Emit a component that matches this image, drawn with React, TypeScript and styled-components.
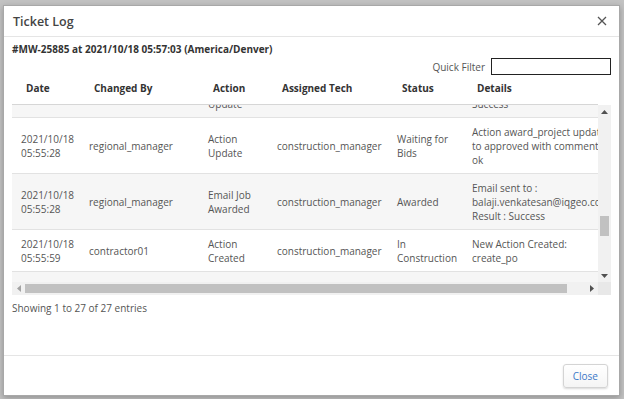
import React from "react";
import styled, { createGlobalStyle } from "styled-components";

const GlobalStyle = createGlobalStyle`
  html, body {
    margin: 0;
    padding: 0;
    background: #c2c2c2;
  }
  body {
    font-family: "Open Sans", "Noto Sans", Arial, sans-serif;
    color: #555;
  }
`;

const COLS = "68px 119px 69px 120px 75px 220px";

const Backdrop = styled.div`
  width: 624px;
  height: 399px;
  box-sizing: border-box;
  padding: 5px 4px 3px 3px;
  background: #c2c2c2;
  display: flex;
`;

const Modal = styled.div`
  flex: 1;
  display: flex;
  flex-direction: column;
  background: #fff;
  border: 1px solid #a8a8a8;
  box-shadow: 0 2px 6px rgba(0, 0, 0, 0.25);
  overflow: hidden;
`;

const ModalHeader = styled.div`
  height: 30px;
  display: flex;
  align-items: center;
  justify-content: space-between;
  padding: 0 11px 0 9px;
  border-bottom: 1px solid #e5e5e5;
`;

const Title = styled.div`
  font-size: 12.5px;
  font-weight: 600;
  color: #444;
`;

const CloseX = styled.button`
  border: 0;
  background: none;
  padding: 0;
  width: 12px;
  height: 12px;
  display: flex;
  align-items: center;
  justify-content: center;
  cursor: pointer;
`;

const ModalBody = styled.div`
  flex: 1;
  padding: 5px 8px 0 8px;
  display: flex;
  flex-direction: column;
`;

const Subtitle = styled.div`
  font-size: 10px;
  font-weight: 700;
  color: #333;
  line-height: 14px;
`;

const FilterRow = styled.div`
  display: flex;
  justify-content: flex-end;
  align-items: center;
  gap: 6px;
  margin-top: 2px;
  font-size: 10px;
  color: #555;
`;

const FilterInput = styled.input`
  width: 120px;
  height: 17px;
  box-sizing: border-box;
  border: 1px solid #222;
  padding: 0 3px;
  margin: 0;
  font-size: 10px;
  outline: none;
`;

const TableWrap = styled.div`
  margin-top: 1px;
  width: 599px;
`;

const HeadRow = styled.div`
  display: grid;
  grid-template-columns: ${COLS};
  height: 29px;
  padding-bottom: 4px;
  align-items: center;
  border-bottom: 1px solid #d6d6d6;
  overflow: hidden;
  width: 586px;
  box-sizing: border-box;
`;

const HeadCell = styled.div`
  padding-left: 14px;
  font-size: 10px;
  font-weight: 700;
  color: #333;
  white-space: nowrap;
`;

const ScrollArea = styled.div`
  display: grid;
  grid-template-columns: 586px 13px;
  grid-template-rows: 177px 13px;
`;

const Viewport = styled.div`
  overflow: hidden;
  display: flex;
  flex-direction: column;
`;

/* rows cut by the scroll viewport: "top" keeps only the bottom of its cells */
const Row = styled.div<{ $striped?: boolean; $clip?: "top" | "bottom" }>`
  display: grid;
  grid-template-columns: ${COLS};
  align-items: center;
  align-content: ${(p) => (p.$clip === "top" ? "end" : "normal")};
  background: ${(p) => (p.$striped ? "#f6f6f6" : "#fff")};
  border-bottom: ${(p) => (p.$clip === "bottom" ? "0" : "1px solid #e2e2e2")};
  height: ${(p) => (p.$clip === "top" ? "12px" : p.$clip === "bottom" ? "10px" : "auto")};
  overflow: hidden;
  flex-shrink: 0;
`;

const Cell = styled.div`
  padding: 6.5px 9px;
  font-size: 10px;
  line-height: 14px;
  color: #555;
  white-space: nowrap;
`;

const VTrack = styled.div`
  background: #f1f1f1;
  display: flex;
  flex-direction: column;
  align-items: center;
`;

const HTrack = styled.div`
  background: #f1f1f1;
  display: flex;
  align-items: center;
`;

const Corner = styled.div`
  background: #e8e8e8;
`;

const ArrowBtn = styled.div<{ $size: number }>`
  width: ${(p) => p.$size}px;
  height: ${(p) => p.$size}px;
  display: flex;
  align-items: center;
  justify-content: center;
  flex-shrink: 0;
`;

const VThumbSpace = styled.div`
  flex: 1;
  width: 100%;
  display: flex;
  flex-direction: column;
  align-items: center;
`;

const VThumb = styled.div`
  width: 9px;
  height: 20px;
  background: #c1c1c1;
  margin-top: 98px;
`;

const HThumb = styled.div`
  flex: 1;
  height: 9px;
  background: #c1c1c1;
  margin-right: 18px;
`;

const Info = styled.div`
  margin-top: 6px;
  font-size: 10px;
  color: #555;
  line-height: 14px;
`;

const ModalFooter = styled.div`
  height: 39px;
  border-top: 1px solid #e5e5e5;
  display: flex;
  align-items: center;
  justify-content: flex-end;
  padding-right: 11px;
`;

const Button = styled.button`
  height: 24px;
  padding: 0 9px;
  font-family: inherit;
  font-size: 10px;
  color: #3b78c8;
  background: linear-gradient(#ffffff, #f5f5f5);
  border: 1px solid #d4d4d4;
  border-radius: 3px;
  box-shadow: 0 1px 2px rgba(0, 0, 0, 0.15);
  cursor: pointer;
`;

type Arrow = "up" | "down" | "left" | "right";

const arrowPoints: Record<Arrow, string> = {
  up: "0,4 3.5,0 7,4",
  down: "0,0 3.5,4 7,0",
  left: "4,0 0,3.5 4,7",
  right: "0,0 4,3.5 0,7",
};

function Tri({ dir, fill }: { dir: Arrow; fill: string }) {
  const vertical = dir === "up" || dir === "down";
  return (
    <svg width={vertical ? 7 : 4} height={vertical ? 4 : 7} viewBox={vertical ? "0 0 7 4" : "0 0 4 7"}>
      <polygon points={arrowPoints[dir]} fill={fill} />
    </svg>
  );
}

const headers = ["Date", "Changed By", "Action", "Assigned Tech", "Status", "Details"];

const rows: string[][][] = [
  [
    ["2021/10/18", "05:55:28"],
    ["regional_manager"],
    ["Action", "Update"],
    ["construction_manager"],
    ["Waiting for", "Bids"],
    ["Action award_project updated", "to approved with comments:", "ok"],
  ],
  [
    ["2021/10/18", "05:55:28"],
    ["regional_manager"],
    ["Email Job", "Awarded"],
    ["construction_manager"],
    ["Awarded"],
    ["Email sent to :", "balaji.venkatesan@iqgeo.com", "Result : Success"],
  ],
  [
    ["2021/10/18", "05:55:59"],
    ["contractor01"],
    ["Action", "Created"],
    ["construction_manager"],
    ["In", "Construction"],
    ["New Action Created:", "create_po"],
  ],
];

const lines = (parts: string[]) =>
  parts.map((p, i) => (
    <React.Fragment key={i}>
      {i > 0 && <br />}
      {p}
    </React.Fragment>
  ));

export default function App() {
  return (
    <>
      <GlobalStyle />
      <Backdrop>
        <Modal>
          <ModalHeader>
            <Title>Ticket Log</Title>
            <CloseX aria-label="close">
              <svg width="10" height="10" viewBox="0 0 10 10">
                <path d="M1 1 L9 9 M9 1 L1 9" stroke="#555" strokeWidth="1.3" />
              </svg>
            </CloseX>
          </ModalHeader>
          <ModalBody>
            <Subtitle>#MW-25885 at 2021/10/18 05:57:03 (America/Denver)</Subtitle>
            <FilterRow>
              Quick Filter
              <FilterInput />
            </FilterRow>
            <TableWrap>
              <HeadRow>
                {headers.map((h) => (
                  <HeadCell key={h}>{h}</HeadCell>
                ))}
              </HeadRow>
              <ScrollArea>
                <Viewport>
                  <Row $striped $clip="top">
                    <Cell />
                    <Cell />
                    <Cell>Update</Cell>
                    <Cell />
                    <Cell />
                    <Cell>Success</Cell>
                  </Row>
                  {rows.map((r, i) => (
                    <Row key={i} $striped={i % 2 === 1}>
                      {r.map((c, j) => (
                        <Cell key={j}>{lines(c)}</Cell>
                      ))}
                    </Row>
                  ))}
                  <Row $striped $clip="bottom" />
                </Viewport>
                <VTrack>
                  <ArrowBtn $size={13}>
                    <Tri dir="up" fill="#505050" />
                  </ArrowBtn>
                  <VThumbSpace>
                    <VThumb />
                  </VThumbSpace>
                  <ArrowBtn $size={13}>
                    <Tri dir="down" fill="#505050" />
                  </ArrowBtn>
                </VTrack>
                <HTrack>
                  <ArrowBtn $size={13}>
                    <Tri dir="left" fill="#a3a3a3" />
                  </ArrowBtn>
                  <HThumb />
                  <ArrowBtn $size={13}>
                    <Tri dir="right" fill="#505050" />
                  </ArrowBtn>
                </HTrack>
                <Corner />
              </ScrollArea>
            </TableWrap>
            <Info>Showing 1 to 27 of 27 entries</Info>
          </ModalBody>
          <ModalFooter>
            <Button>Close</Button>
          </ModalFooter>
        </Modal>
      </Backdrop>
    </>
  );
}
